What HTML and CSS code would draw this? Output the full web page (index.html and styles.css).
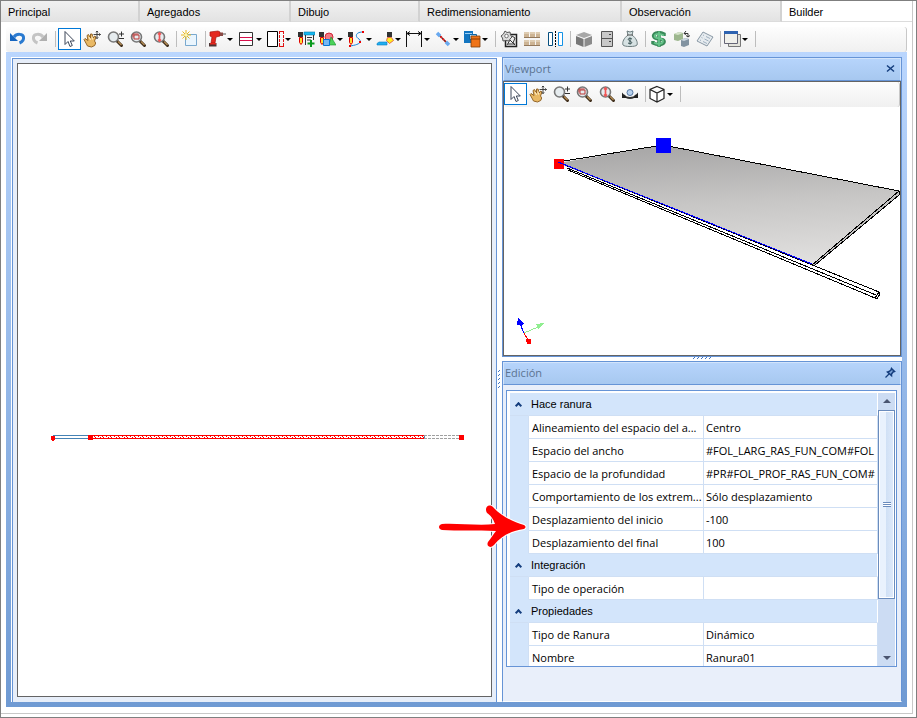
FILE: index.html
```
<!DOCTYPE html>
<html lang="es">

<head>
    <meta charset="UTF-8">
    <meta name="viewport" content="width=device-width, initial-scale=1.0">
    <title>Builder</title>
    <link rel="stylesheet" href="styles.css">
</head>

<body>

    <!-- shared icons -->
    <svg class="sprite" aria-hidden="true">
        <symbol id="i-cursor" viewBox="0 0 18 18">
            <path d="M5 1.500v13l3-3 2 5 2.300-1-2-4.500h4z" fill="#fff" stroke="#3c4658" />
        </symbol>
        <symbol id="i-hand" viewBox="0 0 18 18">
            <path d="M1 9.500l1-1 3 2-1-5 1.500-1 2 3.500 0-4h1.600l1 4 1.600-2 1.300 1-1.500 4 1.200 2-1 2.500-3.200 1.500-4-1z" fill="#e9b965" stroke="#8a5a1c" stroke-width=".9" />
            <path d="M6 7l1.500 3M9 6.500l.5 3" stroke="#fff0cf" />
            <path d="M14 1v8M10.500 4.500h7M12.800 2.200L14 1l1.200 1.200M12.800 7.300L14 8.500l1.200-1.200M16.300 3.300l1.200 1.200-1.200 1.200" fill="none" stroke="#333" stroke-width=".9" />
        </symbol>
        <symbol id="i-lens" viewBox="0 0 18 18">
            <path d="M11 11l4.500 4.500" stroke="#3b2a18" stroke-width="3" stroke-linecap="round" />
            <path d="M12 11.500l3.500 3.500" stroke="#b28a52" stroke-width="1.400" />
            <circle cx="7.500" cy="7" r="5" fill="#e6ecef" stroke="#777" stroke-width="1.600" />
        </symbol>
        <symbol id="i-zoom" viewBox="0 0 18 18">
            <use href="#i-lens" />
            <path d="M15.500 1.500v5M13 4h5M13 8.500h5" stroke="#333" />
        </symbol>
        <symbol id="i-zoom-area" viewBox="0 0 18 18">
            <use href="#i-lens" />
            <path d="M5 5h5v4H5zM4 7.500V4h5.500" fill="none" stroke="#b93434" />
        </symbol>
        <symbol id="i-zoom-fit" viewBox="0 0 18 18">
            <use href="#i-lens" />
            <path d="M7.500 3v8M6 4.500L7.500 3 9 4.500M6 9.500L7.500 11 9 9.500" fill="none" stroke="#f05555" stroke-width="1.700" />
        </symbol>
    </svg>

    <div class="app">
        <nav class="tabs" role="tablist">
            <button type="button" role="tab" class="tab t1">Principal</button>
            <button type="button" role="tab" class="tab t2">Agregados</button>
            <button type="button" role="tab" class="tab t3">Dibujo</button>
            <button type="button" role="tab" class="tab t4">Redimensionamiento</button>
            <button type="button" role="tab" class="tab t5">Observación</button>
            <button type="button" role="tab" class="tab active" aria-selected="true">Builder</button>
        </nav>

        <main class="page">
            <div class="toolbar" role="toolbar">
                <button type="button" class="tool" aria-label="Deshacer"><svg viewBox="0 0 18 18"><path d="M6 7c3-4 9-3 9.500 0 .5 3-1.500 5-4 6" fill="none" stroke="#2a7ad0" stroke-width="3" /><path d="M2 3v8h8z" fill="#1565c0" /></svg></button>
                <button type="button" class="tool" aria-label="Rehacer"><svg viewBox="0 0 18 18"><path d="M12 7C9 3 3 4 2.500 7c-.5 3 1.500 5 4 6" fill="none" stroke="#c4c4c4" stroke-width="3" /><path d="M16 3v8H8z" fill="#b0b0b0" /></svg></button>
                <span class="sep"></span>
                <button type="button" class="tool on" aria-label="Seleccionar"><svg><use href="#i-cursor" /></svg></button>
                <button type="button" class="tool" aria-label="Mover"><svg><use href="#i-hand" /></svg></button>
                <button type="button" class="tool" aria-label="Zoom"><svg><use href="#i-zoom" /></svg></button>
                <button type="button" class="tool" aria-label="Zoom de área"><svg><use href="#i-zoom-area" /></svg></button>
                <button type="button" class="tool" aria-label="Ajustar zoom"><svg><use href="#i-zoom-fit" /></svg></button>
                <span class="sep"></span>
                <button type="button" class="tool" aria-label="Nuevo"><svg viewBox="0 0 18 18"><path d="M4.500 4.500h11v11h-11z" fill="#eaf5fd" stroke="#79a9cf" /><path d="M5 0v10M0 5h10M1.500 1.500l7 7M8.500 1.500l-7 7" stroke="#e8b820" /><circle cx="5" cy="5" r="1.500" fill="#fff8b0" /></svg></button>
                <span class="sep"></span>
                <button type="button" class="tool drop" aria-label="Perforar"><svg viewBox="0 0 18 18"><path d="M2 2l8-1 2 1v4l-4 1-1 6H3l1-6-2-1z" fill="#e5281f" stroke="#a3140f" stroke-width=".7" /><path d="M12 2.500h3V6h-3z" fill="#8a4a45" /><path d="M15 4h3" stroke="#555" /><path d="M1 13h7.500v3.500H1z" fill="#4d3434" /><path d="M2 13h6v1.500H2z" fill="#e5281f" /></svg></button>
                <button type="button" class="tool drop" aria-label="Ranura"><svg viewBox="0 0 18 18"><path d="M2.500 2.500h13v13h-13z" fill="#fff" stroke="#333" /><path d="M3 7.500h12M3 10.500h12" stroke="#d8104c" /></svg></button>
                <button type="button" class="tool drop" aria-label="Borde"><svg viewBox="0 0 18 18"><path d="M1.500 1.500h10v15h-10z" fill="#fff" stroke="#000" /><path d="M13.500 1v16M17.500 1v16" stroke="#e01010" stroke-dasharray="3 1" /><path d="M13 1.500h5M13 16.500h5" stroke="#e01010" /></svg></button>
                <button type="button" class="tool" aria-label="Agregar fresado"><svg viewBox="0 0 18 18"><path d="M1 2h5v5H1z" fill="#333" /><path d="M2.500 7.500h3v5l-1.500 2-1.500-2z" fill="#fd3" stroke="#d00" /><path d="M7 2h11v3H7z" fill="#15b7ef" stroke="#077aaa" stroke-width=".6" /><path d="M8.500 5v10M16.500 5v5M10 7.500h5M10 10h4" fill="none" stroke="#333" /><path d="M14 10v7M10.500 13.500h7" stroke="#0a9a1e" stroke-width="2" /></svg></button>
                <button type="button" class="tool drop" aria-label="Formas"><svg viewBox="0 0 18 18"><path d="M1 2h5v5H1z" fill="#333" /><path d="M2.500 7.500h3v5l-1.500 2-1.500-2z" fill="#fd3" stroke="#d00" /><circle cx="11" cy="7" r="4" fill="#f07a85" stroke="#d32535" /><path d="M13 7l5 8h-7z" fill="#4bd25a" stroke="#159128" stroke-width=".6" /><path d="M5.500 9.500h6v6h-6z" fill="#76b7f2" stroke="#0876d0" /></svg></button>
                <button type="button" class="tool drop" aria-label="Curva"><svg viewBox="0 0 18 18"><path d="M1 2h5v5H1z" fill="#333" /><path d="M2.500 7.500h3v5l-1.500 2-1.500-2z" fill="#fd3" stroke="#d00" /><path d="M16 2C8 2 8 7 12 9c4 4-2 6-9 7" fill="none" stroke="#1685d6" /><path d="M15 1h2v2h-2zM12 11h2v2h-2zM2 15h2v2H2z" fill="#e00" /></svg></button>
                <button type="button" class="tool drop" aria-label="Rebajar"><svg viewBox="0 0 18 18"><path d="M11 2h5v5h-5z" fill="#333" /><path d="M11.500 7.500h4l2 3-4 3-3-3z" fill="#fe2" stroke="#d33" stroke-width=".7" /><path d="M1 13.500l2-1.500h8v3H1z" fill="#20aef0" stroke="#087ec0" stroke-width=".6" /></svg></button>
                <button type="button" class="tool drop" aria-label="Cota"><svg viewBox="0 0 18 18"><path d="M1.500 1v16M16.500 1v16M2 3.500h14M5 1.500l-3 2 3 2M13 1.500l3 2-3 2" fill="none" stroke="#111" /></svg></button>
                <button type="button" class="tool drop" aria-label="Línea"><svg viewBox="0 0 18 18"><path d="M4 4l10 10" stroke="#333" stroke-width="1.200" /><path d="M3 3l3 3M12 12l3 3" stroke="#69a9f0" stroke-width="3.500" /><path d="M6.500 6.500l5 5" stroke="#e22" stroke-width="2" stroke-dasharray="2 1" /></svg></button>
                <button type="button" class="tool drop" aria-label="Orden"><svg viewBox="0 0 18 18"><path d="M1 1h9v12H1z" fill="#1375c0" /><path d="M2 3h7v1H2z" fill="#9ed1f6" /><path d="M6.500 4.500h7v5h-7z" fill="#aee0ff" stroke="#0c66a8" /><path d="M8 6h9v11H8z" fill="#ef7317" stroke="#7b3d0b" stroke-width=".8" /><path d="M8 9h9" stroke="#8a3d00" /></svg></button>
                <span class="sep"></span>
                <button type="button" class="tool" aria-label="Configurar"><svg viewBox="0 0 18 18"><path d="M5.500 4.500h11v12h-11z" fill="#eee" stroke="#222" stroke-width="1.500" /><path d="M7 15l3-5 3 3 2-5M8 14h7M12 6l3 2M12 12l3 3" fill="none" stroke="#333" /><path d="M5 1l2 1.500 3-.5.500 3L12 7l-2 2-1 2-3-.5L3 11l-.5-3L1 6l2.500-2z" fill="#ddd" stroke="#555" /><circle cx="6.500" cy="6" r="1.800" fill="#fff" stroke="#777" /></svg></button>
                <button type="button" class="tool" aria-label="Materiales"><svg viewBox="0 0 18 18"><path d="M1 2h5v6H1zM7 2h5v6H7zM13 2h4v6h-4zM1 10h5v6H1zM7 10h5v6H7zM13 10h4v6h-4z" fill="#cdb494" /><path d="M1 7.500h16M1 15.500h16" stroke="#93785b" /><path d="M1 3h16M1 11h16" stroke="#efe4d0" /></svg></button>
                <button type="button" class="tool" aria-label="Simetría"><svg viewBox="0 0 18 18"><path d="M2.500 2.500h4v13h-4z" fill="#fff" stroke="#075080" /><path d="M12.500 2.500h4v13h-4z" fill="#fff" stroke="#1392e6" /><path d="M9.500 1v16" stroke="#000" stroke-dasharray="2 1" /></svg></button>
                <span class="sep"></span>
                <button type="button" class="tool" aria-label="Caja"><svg viewBox="0 0 18 18"><path d="M1 5l8-3 8 3-8 3z" fill="#a7a7a7" /><path d="M1 6l7.500 3v8L1 14z" fill="#777" /><path d="M17 6L9.500 9v8l7.500-3z" fill="#8b8b8b" /></svg></button>
                <button type="button" class="tool" aria-label="Módulo"><svg viewBox="0 0 18 18"><path d="M3.500 1.500h11v15h-11zM4 8.500h10" fill="#c9c9c9" stroke="#555" /><path d="M11 4.500h2M11 11.500h2" stroke="#444" /></svg></button>
                <button type="button" class="tool" aria-label="Presupuesto"><svg viewBox="0 0 18 18"><path d="M6 1l3 1 3-1-1 4c4 3 6 7 5 10-1 2-13 2-14 0-1-3 1-7 5-10z" fill="#d7e2e3" stroke="#6c7c7e" /><path d="M6 5h6" stroke="#555" /><path d="M11 9c-4-2-5 1-2 2s2 4-2 2M9 7.500v7" fill="none" stroke="#385052" /></svg></button>
                <span class="sep"></span>
                <button type="button" class="tool" aria-label="Costo"><svg viewBox="0 0 18 18"><path d="M14 6V4C8 1 2 4 4 7s9 1 10 4-5 5-11 2v-2M9 1v16" fill="none" stroke="#3a8a5a" stroke-width="3.500" /><path d="M14 5.500C8 2 3 5 5 7s8 1 8 4-5 4-9 1.500M9 1.500v15" fill="none" stroke="#66c48a" stroke-width="1.800" /></svg></button>
                <button type="button" class="tool" aria-label="Reemplazar"><svg viewBox="0 0 18 18"><path d="M1 4l5-2 4 1v6l-5 2-4-1z" fill="#9db78e" /><path d="M1 4l5-2 4 1-5 2z" fill="#d5e3ca" /><path d="M8 10l4-2 4 1v6l-5 2-3-1z" fill="#8293a1" /><path d="M8 10l4-2 4 1-5 2z" fill="#cbd6df" /><path d="M11 3.500h4V7M13 5.500L15 7l2-1.500M13 1l-2 2.500 2 1" fill="none" stroke="#333" /></svg></button>
                <button type="button" class="tool" aria-label="Lista"><svg viewBox="0 0 18 18"><path d="M7 2l10 5-6 9-10-5z" fill="#e6ebef" stroke="#8998a5" /><path d="M7 5l1 .5M10 6.500l4 2M5.500 7.500l1 .5M8.500 9l4 2M4 10l1 .5M7 11.500l4 2" stroke="#9fb0c0" /></svg></button>
                <span class="sep"></span>
                <button type="button" class="tool drop" aria-label="Ventanas"><svg viewBox="0 0 18 18"><path d="M5.500 4.500h12v12h-12z" fill="#e4e4dc" stroke="#777" /><path d="M1.500 1.500h13v12h-13z" fill="#f0f0eb" stroke="#667" /><path d="M1 1h14v3H1z" fill="#2e63b0" /></svg></button>
                <span class="sep"></span>
            </div>

            <div class="workspace">
                <div class="docks">
                    <section class="plan">
                        <div class="sheet">
                            <svg viewBox="0 0 473 632" shape-rendering="crispEdges">
                                <defs>
                                    <pattern id="hatch" width="8" height="3" patternUnits="userSpaceOnUse" y="372">
                                        <path d="M0 0h1v1H0zM4 0h1v1H4zM2 1h1v1H2zM5 1h1v1H5z" fill="#f00" />
                                    </pattern>
                                </defs>
                                <path d="M35 371.500h36M35 374.500h36M406.500 371v4" stroke="#4682b4" fill="none" />
                                <path d="M73 372h333v3H73z" fill="url(#hatch)" />
                                <path d="M73 371.500h333M73 374.500h333" stroke="#f00" />
                                <path d="M406 371.500h36M406 374.500h36" stroke="#a0a0a0" stroke-dasharray="3 1" />
                                <path d="M33 372h4v4h-4zM34 376h2v1h-2zM70 371h5v5h-5zM441 371h5v5h-5z" fill="#f00" />
                            </svg>
                        </div>
                    </section>

                    <div class="split-v"><svg viewBox="0 0 3 19"><path d="M0 2l2-2M0 6l2-2M0 10l2-2M0 14l2-2M0 18l2-2" stroke="#3f74c4" /></svg></div>

                    <div class="side">
                        <section class="dock viewport">
                            <header class="dock-head">
                                <h2>Viewport</h2>
                                <button type="button" class="head-btn" aria-label="Cerrar"><svg viewBox="0 0 11 11"><path d="M2 1.500l7 6M9 1.500l-7 6" stroke="#153e7e" stroke-width="1.500" /></svg></button>
                            </header>
                            <div class="view-box">
                                <div class="toolbar small" role="toolbar">
                                    <button type="button" class="tool on" aria-label="Seleccionar"><svg><use href="#i-cursor" /></svg></button>
                                    <button type="button" class="tool" aria-label="Mover"><svg><use href="#i-hand" /></svg></button>
                                    <button type="button" class="tool" aria-label="Zoom"><svg><use href="#i-zoom" /></svg></button>
                                    <button type="button" class="tool" aria-label="Zoom de área"><svg><use href="#i-zoom-area" /></svg></button>
                                    <button type="button" class="tool" aria-label="Ajustar zoom"><svg><use href="#i-zoom-fit" /></svg></button>
                                    <button type="button" class="tool" aria-label="Orbitar"><svg viewBox="0 0 18 18"><path d="M2.500 10c3 4 10 4 13 0" fill="none" stroke="#333" stroke-width="2" /><path d="M1 7.500v5.500h5zM17 7.500v5.500h-5z" fill="#222" /><circle cx="9" cy="7.500" r="3" fill="#b9d2ee" stroke="#5779a5" /></svg></button>
                                    <span class="sep"></span>
                                    <button type="button" class="tool drop" aria-label="Vista"><svg viewBox="0 0 18 18"><path d="M9 1.500l7 3v9l-7 3.500-7-3.500v-9zM2 4.500L9 8l7-3.500M9 8v9" fill="#fff" stroke="#222" stroke-width="1.200" /></svg></button>
                                    <span class="sep"></span>
                                </div>
                                <svg class="scene" viewBox="1 0 396 247" preserveAspectRatio="xMinYMin">
                                    <defs>
                                        <linearGradient id="shade" x1=".6" y1="0" x2=".75" y2="1">
                                            <stop offset="0" stop-color="#aaa9a9" />
                                            <stop offset=".45" stop-color="#c7c6c5" />
                                            <stop offset="1" stop-color="#e2e1e0" />
                                        </linearGradient>
                                    </defs>
                                    <path d="M55 56L160 38 396 84 309 158z" fill="url(#shade)" />
                                    <path d="M396 84v4l-84 70h-3z" fill="#c4c3c2" />
                                    <g fill="none" stroke="#000" shape-rendering="crispEdges">
                                        <path d="M55 55L160 38 396 84 309 158M396 84v4l-84 70" />
                                        <path d="M62 58L376 185M64 61L373 188M65 63L372 191M376 185l1 2-3 5-2-1 4-6" />
                                    </g>
                                    <rect x="51" y="52" width="10" height="10" fill="#f00" />
                                    <path d="M55 55L309 157" stroke="#00f" shape-rendering="crispEdges" />
                                    <rect x="153" y="31" width="15" height="15" fill="#00f" />
                                    <g shape-rendering="crispEdges">
                                        <path d="M21 226l-4-9" stroke="#00f" />
                                        <path d="M15 211l6 5-2 3-5-1z" fill="#00f" />
                                        <path d="M21 226l14-6" stroke="#90ee90" />
                                        <path d="M41 216l-8 1 2 5z" fill="#90ee90" />
                                        <path d="M21 226l4 7" stroke="#f00" />
                                        <path d="M23 232h5v5h-4z" fill="#f00" />
                                    </g>
                                </svg>
                            </div>
                        </section>

                        <div class="split-h"><svg viewBox="0 0 19 3"><path d="M0 2l2-2M4 2l2-2M8 2l2-2M12 2l2-2M16 2l2-2" stroke="#3f74c4" /></svg></div>

                        <section class="dock editor">
                            <header class="dock-head">
                                <h2>Edición</h2>
                                <button type="button" class="head-btn" aria-label="Fijar"><svg viewBox="0 0 11 11"><path d="M6.500 1.500l3 3-1.500.5-1.500 2 0 1.500L2.500 5 4 4.500l2-1.500z" fill="#7ea6da" stroke="#153e7e" stroke-width="1.500" /><path d="M4 7L.5 10.500" stroke="#153e7e" stroke-width="1.300" /></svg></button>
                            </header>
                            <div class="editor-body">
                                <div class="props">
                                    <div class="props-view">
                                        <table>
                                            <colgroup>
                                                <col class="c-mark">
                                                <col class="c-name">
                                                <col>
                                            </colgroup>
                                            <tbody>
                                                <tr class="cat"><td><i class="chev"></i></td><th colspan="2">Hace ranura</th></tr>
                                                <tr><td class="mark"></td><th>Alineamiento del espacio del a...</th><td>Centro</td></tr>
                                                <tr><td class="mark"></td><th>Espacio del ancho</th><td>#FOL_LARG_RAS_FUN_COM#FOL</td></tr>
                                                <tr><td class="mark"></td><th>Espacio de la profundidad</th><td>#PR#FOL_PROF_RAS_FUN_COM#</td></tr>
                                                <tr><td class="mark"></td><th>Comportamiento de los extrem...</th><td>Sólo desplazamiento</td></tr>
                                                <tr><td class="mark"></td><th>Desplazamiento del inicio</th><td>-100</td></tr>
                                                <tr><td class="mark"></td><th>Desplazamiento del final</th><td>100</td></tr>
                                                <tr class="cat"><td><i class="chev"></i></td><th colspan="2">Integración</th></tr>
                                                <tr><td class="mark"></td><th>Tipo de operación</th><td></td></tr>
                                                <tr class="cat"><td><i class="chev"></i></td><th colspan="2">Propiedades</th></tr>
                                                <tr><td class="mark"></td><th>Tipo de Ranura</th><td>Dinámico</td></tr>
                                                <tr><td class="mark"></td><th>Nombre</th><td>Ranura01</td></tr>
                                            </tbody>
                                        </table>
                                    </div>
                                    <div class="scroll">
                                        <button type="button" class="scroll-btn up" aria-label="Subir"></button>
                                        <div class="track">
                                            <div class="thumb"><i></i></div>
                                        </div>
                                        <button type="button" class="scroll-btn down" aria-label="Bajar"></button>
                                    </div>
                                </div>
                            </div>

                            <!-- arrow that points at the offset rows -->
                            <svg class="pointer" viewBox="0 0 94 48" aria-hidden="true">
                                <path d="M5 21C20 20 42 23 58 21 56 15 53 12 50 10 47 5 51 0 56 4 64 13 76 19 87 22 89 23 89 25 87 26 76 28 66 31 57 42 53 46 49 43 51 39 54 35 56 32 59 28 40 27 20 28 5 27 1 26 1 22 5 21z" fill="#f00" stroke="#fff" stroke-width="2" paint-order="stroke" />
                            </svg>
                        </section>
                    </div>
                </div>
            </div>
        </main>
    </div>

</body>

</html>
```
FILE: styles.css
```
* {
    box-sizing: border-box;
    margin: 0;
    padding: 0;
}

body {
    font-family: "Open Sans", "Noto Sans", sans-serif;
    font-size: 11px;
    line-height: 16px;
    color: #000;
    background: #fff;
}

button {
    border: 0;
    background: none;
    font: inherit;
    color: inherit;
}

.sprite {
    position: absolute;
    width: 0;
    height: 0;
}

.app {
    display: flex;
    flex-direction: column;
    height: 100vh;
    min-height: 600px;
    border: 1px solid #7f7f7f;
    padding: 0 3px 3px 0;
}

/* tabs */
.tabs {
    display: flex;
    height: 21px;
    border-right: 1px solid #c8c8c8;
    font-family: "Liberation Sans", sans-serif;
}

.tab {
    padding: 2px 7px 0;
    text-align: left;
    background: linear-gradient(#f1f1f1, #e3e3e3);
    border-right: 2px solid #d2d2d2;
    border-bottom: 1px solid #dcdcdc;
}

.tab.t1 { width: 139px; }
.tab.t2 { width: 151px; }
.tab.t3 { width: 129px; }
.tab.t4 { width: 202px; }
.tab.t5 { width: 160px; }

.tab.active {
    flex: 1;
    background: #fff;
    border-right: 0;
}

/* page */
.page {
    flex: 1;
    min-height: 0;
    display: flex;
    flex-direction: column;
    padding: 5px 5px 6px;
    border-right: 1px solid #c8c8c8;
    border-bottom: 1px solid #c8c8c8;
}

.toolbar {
    display: flex;
    align-items: center;
    height: 25px;
    flex: none;
    padding-bottom: 1px;
    background: linear-gradient(#fdfdfd, #f0f0f0);
    border-right: 1px solid #c8c8c8;
    border-radius: 3px;
}

.tool {
    display: flex;
    align-items: center;
    justify-content: center;
    flex: none;
    width: 23px;
    height: 22px;
    padding-right: 2px;
}

.tool svg {
    width: 18px;
    height: 18px;
}

.tool.on {
    border: 1px solid #0078d7;
    background: #fff;
}

.tool.drop {
    justify-content: flex-start;
    width: 29px;
    gap: 1px;
}

.tool.drop::after {
    content: "";
    border: 3px solid transparent;
    border-top-color: #000;
    border-bottom: 0;
}

.sep {
    flex: none;
    width: 6px;
    height: 16px;
    background: linear-gradient(#bdbdbd, #bdbdbd) 3px 0 / 1px 100% no-repeat;
}

/* docking area */
.workspace {
    flex: 1;
    min-height: 0;
    padding: 5px;
    background: linear-gradient(#bad6fe, #6f9ad3);
}

.docks {
    display: flex;
    height: 100%;
    background: #fff;
}

.plan {
    flex: 1;
    margin: 1px 0 0 1px;
    padding: 4px 4px 5px;
    background: #e7eef9;
    border: 1px solid #6694d6;
    border-bottom: 0;
}

.sheet {
    height: 100%;
    background: #fff;
    border: 1px solid #646464;
}

.sheet svg {
    display: block;
    width: 100%;
    height: 100%;
}

.split-v {
    display: flex;
    align-items: center;
    justify-content: center;
    width: 5px;
}

.split-v svg {
    width: 3px;
    height: 19px;
}

.side {
    display: flex;
    flex-direction: column;
    width: 400px;
}

.dock {
    display: flex;
    flex-direction: column;
    border: 1px solid #6694d6;
}

.dock-head {
    display: flex;
    flex: none;
    align-items: center;
    justify-content: space-between;
    height: 23px;
    padding: 0 4px 1px 1px;
    border: 1px solid #d3e4fb;
    border-bottom-color: #6694d6;
    background: linear-gradient(#b6d4fb, #a7c8f0);
}

.dock-head h2 {
    font-size: 11px;
    font-weight: normal;
    color: #5b7391;
}

.head-btn,
.head-btn svg {
    display: block;
    width: 11px;
    height: 11px;
}

.viewport {
    flex: 299;
    min-height: 0;
}

.view-box {
    flex: 1;
    min-height: 0;
    display: flex;
    flex-direction: column;
    border: 1px solid #646464;
    background: #fff;
}

.scene {
    flex: 1;
    display: block;
    width: 100%;
    min-height: 0;
}

.split-h {
    display: flex;
    justify-content: center;
    height: 4px;
}

.split-h svg {
    width: 19px;
    height: 3px;
}

.editor {
    position: relative;
    flex: 341;
    min-height: 0;
    border-bottom-color: #fff;
}

.editor-body {
    flex: 1;
    min-height: 0;
    padding: 5px 4px 34px 3px;
    background: #e9effa;
}

/* property grid */
.props {
    display: flex;
    height: 100%;
    padding: 2px 1px 0 3px;
    border: 1px solid #6694d6;
    background: #fff;
    overflow: hidden;
}

.props-view {
    flex: 1;
    min-width: 0;
    overflow: hidden;
}

.props table {
    width: 100%;
    table-layout: fixed;
    border-collapse: separate;
    border-spacing: 0;
}

.c-mark { width: 19px; }
.c-name { width: 175px; }

.props th,
.props td {
    height: 23px;
    padding: 2px 2px 0 3px;
    font-weight: normal;
    text-align: left;
    white-space: nowrap;
    overflow: hidden;
    border-bottom: 1px solid #cfdff4;
    border-right: 1px solid #cfdff4;
}

.props td {
    padding-left: 2px;
}

.props .cat td,
.props .cat th {
    background: #d3e5fb;
    border-right-color: #fff;
}

.props .cat th {
    padding: 0 2px;
    font-family: "Liberation Sans", sans-serif;
}

.props .cat td {
    padding: 0;
    border-right-color: #d3e5fb;
}

.props .mark {
    background: #d3e5fb;
    border-bottom-color: #d3e5fb;
}

.chev {
    display: block;
    width: 5px;
    height: 5px;
    margin: 4px 0 0 6px;
    border: solid #153e7e;
    border-width: 2px 0 0 2px;
    transform: rotate(45deg);
}

.scroll {
    display: flex;
    flex-direction: column;
    flex: none;
    width: 17px;
    background: #ccdcf3;
}

.scroll-btn {
    display: flex;
    flex: none;
    align-items: center;
    justify-content: center;
    height: 17px;
}

.scroll-btn::before {
    content: "";
    border: 4px solid transparent;
}

.scroll-btn.up::before {
    border-top: 0;
    border-bottom-color: #4a5570;
}

.scroll-btn.down::before {
    border-bottom: 0;
    border-top-color: #4a5570;
}

.track {
    flex: 1;
    min-height: 0;
}

.thumb {
    display: flex;
    align-items: center;
    justify-content: center;
    height: 79%;
    border: 1px solid #6a8cbd;
    box-shadow: inset 0 0 0 1px #fff;
    background: linear-gradient(90deg, #e9f2fd 45%, #cfe0f5 45%, #dfeafa);
}

.thumb i {
    width: 8px;
    height: 5px;
    background: repeating-linear-gradient(#6a8cbd 0 1px, #fff 1px 2px);
}

/* red arrow over both docks */
.pointer {
    position: absolute;
    top: 141px;
    left: -66px;
    width: 94px;
    height: 48px;
}
```
